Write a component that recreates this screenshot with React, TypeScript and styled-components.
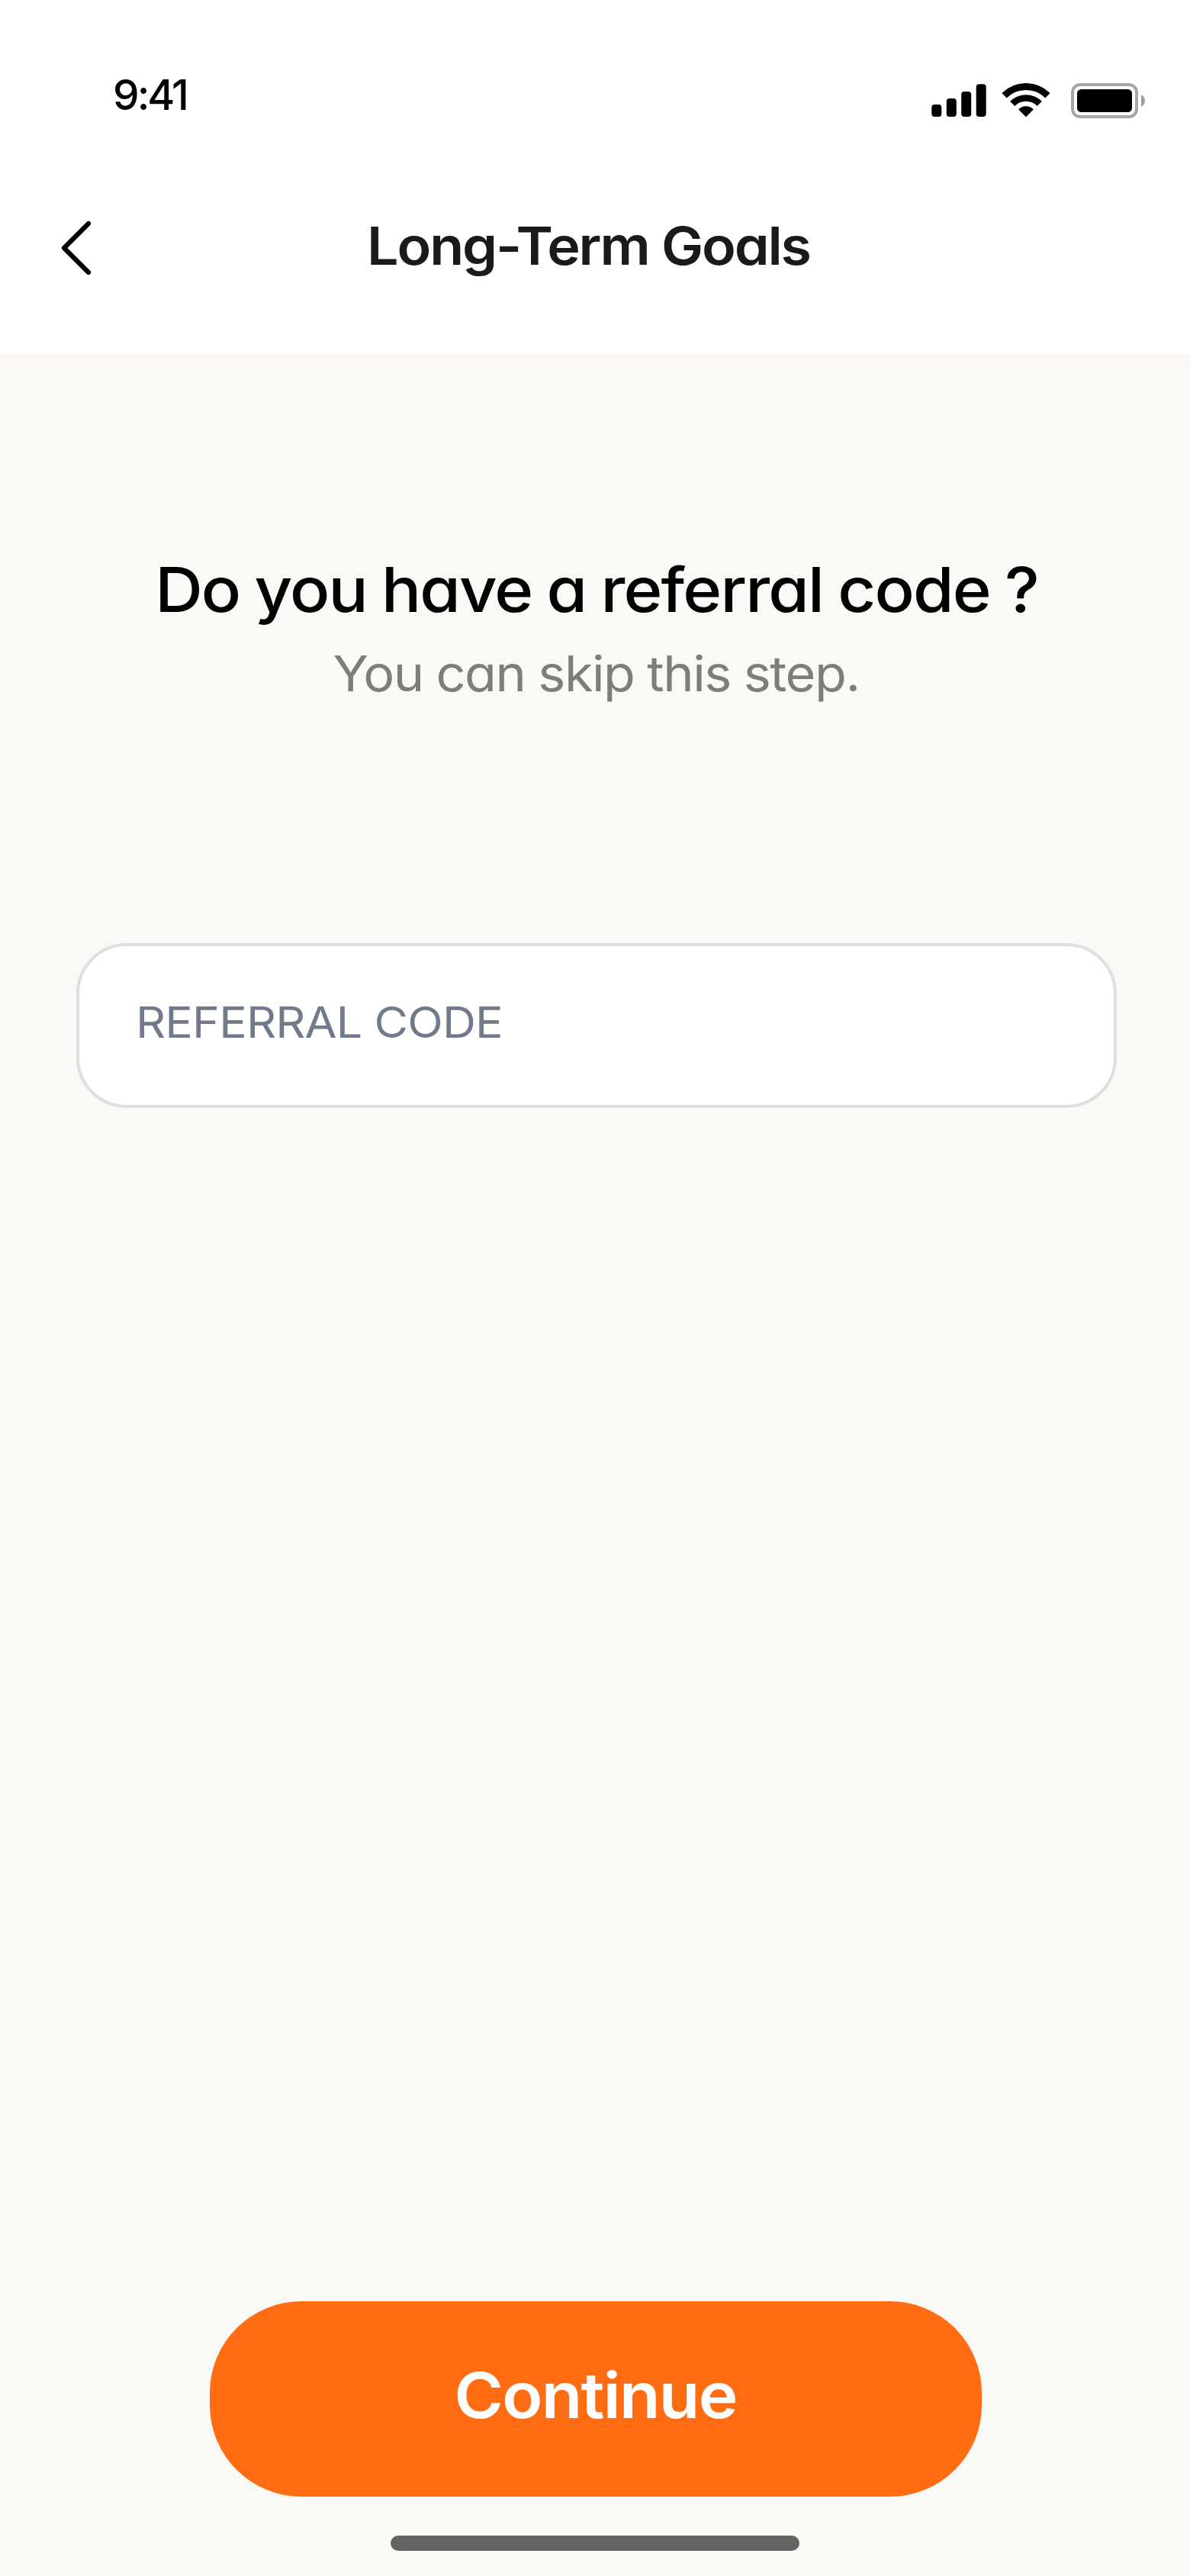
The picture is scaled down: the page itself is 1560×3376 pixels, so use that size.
import React from "react";
import styled, { createGlobalStyle } from "styled-components";

const GlobalStyle = createGlobalStyle`
  *, *::before, *::after { box-sizing: border-box; }
  body {
    margin: 0;
    background: #faf9f6;
    font-family: Inter, "Open Sans", "Liberation Sans", sans-serif;
    font-feature-settings: "cv11" 1;
  }
`;

const Screen = styled.div`
  display: flex;
  flex-direction: column;
  width: 1560px;
  height: 3376px;
  background: #faf9f6;
`;

const Header = styled.header`
  display: flex;
  flex-direction: column;
  height: 479px;
  background: #ffffff;
  border-bottom: 15px solid #fdf7f4;
`;

const StatusBar = styled.div`
  display: flex;
  justify-content: space-between;
  align-items: flex-start;
  height: 188px;
  padding: 84px 58px 0 148px;
`;

const Clock = styled.time`
  font-size: 55px;
  font-weight: 450;
  line-height: 80px;
  letter-spacing: -3px;
  color: #000000;
`;

const StatusIcons = styled.div`
  display: flex;
  align-items: flex-start;
  padding-top: 25px;

  svg { display: block; }
  svg + svg { margin-left: 20px; }
  svg:last-child { margin-left: 27px; }
`;

const NavBar = styled.nav`
  display: grid;
  grid-template-columns: 160px 1fr 160px;
  align-items: center;
  height: 274px;
`;

const BackButton = styled.button`
  display: flex;
  justify-content: flex-start;
  padding: 0 0 0 78px;
  border: 0;
  background: none;
`;

/* Stretches Inter sideways towards a wider geometric cut. */
const Wide = styled.span<{ $stretch: number; $tracking: number; $wordGap?: number }>`
  display: inline-block;
  white-space: nowrap;
  transform: scaleX(${(p) => p.$stretch});
  letter-spacing: ${(p) => p.$tracking}px;
  word-spacing: ${(p) => p.$wordGap ?? 0}px;
`;

const NavTitle = styled.h1`
  margin: 0;
  padding: 0 17px 6px 0;
  font-size: 68.8px;
  font-weight: 600;
  line-height: 84px;
  text-align: center;
  color: #1a1a1a;
`;

const Content = styled.main`
  display: flex;
  flex: 1;
  flex-direction: column;
  padding: 239px 96px 0 100px;
`;

const Question = styled.h2`
  margin: 0;
  font-size: 81px;
  font-weight: 500;
  line-height: 110px;
  text-align: center;
  color: #000000;
`;

const Hint = styled.p`
  margin: 10px 0 0;
  font-size: 64.6px;
  font-weight: 400;
  line-height: 90px;
  text-align: center;
  color: #7d7d7b;
`;

const CodeField = styled.label`
  display: flex;
  align-items: center;
  height: 216px;
  margin-top: 308px;
  padding: 0 74px 10px;
  border: 4px solid #dfdfdf;
  border-radius: 66px;
  background: #ffffff;
`;

const CodeInput = styled.input`
  width: 92%;
  padding: 0;
  border: 0;
  outline: 0;
  background: transparent;
  font-family: inherit;
  font-size: 56.4px;
  letter-spacing: -0.8px;
  color: #1a1a1a;
  transform: scaleX(1.08);
  transform-origin: left center;

  &::placeholder {
    color: #71798c;
    opacity: 1;
  }
`;

const Footer = styled.footer`
  display: flex;
  flex-direction: column;
  align-items: center;
  padding: 0 0 33px;
`;

const ContinueButton = styled.button`
  width: 1012px;
  height: 256px;
  margin-left: 2px;
  padding: 0 0 10px;
  border: 0;
  border-radius: 120px;
  background: #ff6c12;
  font-family: inherit;
  font-size: 82.5px;
  font-weight: 600;
  font-feature-settings: inherit;
  color: #ffffff;
`;

const HomeIndicator = styled.div`
  width: 536px;
  height: 20px;
  margin-top: 51px;
  border-radius: 10px;
  background: #646462;
`;

function SignalIcon() {
  return (
    <svg width="72" height="44" viewBox="0 0 72 44" fill="#000">
      <rect x="0.3" y="28" width="13" height="16" rx="4" />
      <rect x="19.8" y="20" width="13" height="24" rx="4" />
      <rect x="39.2" y="11" width="13" height="33" rx="4" />
      <rect x="58.7" y="1.3" width="13" height="42.7" rx="4" />
    </svg>
  );
}

function WifiIcon() {
  return (
    <svg width="64" height="46" viewBox="0 0 64 46" fill="none" stroke="#000">
      <path d="M3.57 16.27A40.2 40.2 0 0 1 60.43 16.27" strokeWidth="9" />
      <path d="M14.18 26.88A25.2 25.2 0 0 1 49.82 26.88" strokeWidth="8.6" />
      <path d="M32 44L22.8 34.8Q22.4 34.3 22.9 33.9C28.2 29.3 35.8 29.3 41.1 33.9Q41.6 34.3 41.2 34.8Z" fill="#000" strokeWidth="0.6" />
    </svg>
  );
}

function BatteryIcon() {
  return (
    <svg width="98" height="46" viewBox="0 0 98 46">
      <rect x="2" y="2" width="84" height="42" rx="10" fill="none" stroke="#a6a6a6" strokeWidth="4" />
      <rect x="8" y="8" width="72" height="30" rx="5.5" fill="#000" />
      <path d="M92 15A9 9 0 0 1 92 31Z" fill="#9c9c9c" />
    </svg>
  );
}

function BackIcon() {
  return (
    <svg width="44" height="72" viewBox="0 0 44 72" fill="none" stroke="#000" strokeWidth="6.2" strokeLinecap="round" strokeLinejoin="round">
      <path d="M38 4L6 36L38 68" />
    </svg>
  );
}

export default function App() {
  return (
    <>
      <GlobalStyle />
      <Screen>
        <Header>
          <StatusBar>
            <Clock>9:41</Clock>
            <StatusIcons>
              <SignalIcon />
              <WifiIcon />
              <BatteryIcon />
            </StatusIcons>
          </StatusBar>
          <NavBar>
            <BackButton aria-label="Back">
              <BackIcon />
            </BackButton>
            <NavTitle>
              <Wide $stretch={1.07} $tracking={-2}>Long-Term Goals</Wide>
            </NavTitle>
          </NavBar>
        </Header>
        <Content>
          <Question>
            <Wide $stretch={1.07} $tracking={-1.7} $wordGap={-2}>Do you have a referral code ?</Wide>
          </Question>
          <Hint>
            <Wide $stretch={1.06} $tracking={-1.4} $wordGap={-1}>You can skip this step.</Wide>
          </Hint>
          <CodeField>
            <CodeInput placeholder="REFERRAL CODE" />
          </CodeField>
        </Content>
        <Footer>
          <ContinueButton>
            <Wide $stretch={1.06} $tracking={-1.6}>Continue</Wide>
          </ContinueButton>
          <HomeIndicator />
        </Footer>
      </Screen>
    </>
  );
}
